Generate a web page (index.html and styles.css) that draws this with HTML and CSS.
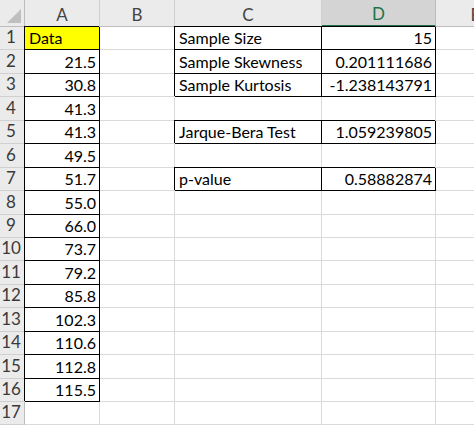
FILE: index.html
```html
<!DOCTYPE html>
<html>
<head>
<meta charset="utf-8">
<link rel="stylesheet" href="styles.css">
</head>
<body>
<div class="sheet">
  <div class="corner"><svg class="tri" width="14" height="14" viewBox="0 0 14 14"><polygon points="14,0 14,14 0,14" fill="#bfbfbf"/></svg></div>
  <div class="ch">A</div><div class="ch">B</div><div class="ch">C</div><div class="ch sel">D</div><div class="ch">E</div>

  <div class="rh">1</div><div class="cell b hl">Data</div><div class="cell"></div><div class="cell b">Sample Size</div><div class="cell b num">15</div><div class="cell"></div>
  <div class="rh">2</div><div class="cell b num">21.5</div><div class="cell"></div><div class="cell b">Sample Skewness</div><div class="cell b num">0.201111686</div><div class="cell"></div>
  <div class="rh">3</div><div class="cell b num">30.8</div><div class="cell"></div><div class="cell b">Sample Kurtosis</div><div class="cell b num">-1.238143791</div><div class="cell"></div>
  <div class="rh">4</div><div class="cell b num">41.3</div><div class="cell"></div><div class="cell"></div><div class="cell"></div><div class="cell"></div>
  <div class="rh">5</div><div class="cell b num">41.3</div><div class="cell"></div><div class="cell b">Jarque-Bera Test</div><div class="cell b num">1.059239805</div><div class="cell"></div>
  <div class="rh">6</div><div class="cell b num">49.5</div><div class="cell"></div><div class="cell"></div><div class="cell"></div><div class="cell"></div>
  <div class="rh">7</div><div class="cell b num">51.7</div><div class="cell"></div><div class="cell b">p-value</div><div class="cell b num">0.58882874</div><div class="cell"></div>
  <div class="rh">8</div><div class="cell b num">55.0</div><div class="cell"></div><div class="cell"></div><div class="cell"></div><div class="cell"></div>
  <div class="rh">9</div><div class="cell b num">66.0</div><div class="cell"></div><div class="cell"></div><div class="cell"></div><div class="cell"></div>
  <div class="rh">10</div><div class="cell b num">73.7</div><div class="cell"></div><div class="cell"></div><div class="cell"></div><div class="cell"></div>
  <div class="rh">11</div><div class="cell b num">79.2</div><div class="cell"></div><div class="cell"></div><div class="cell"></div><div class="cell"></div>
  <div class="rh">12</div><div class="cell b num">85.8</div><div class="cell"></div><div class="cell"></div><div class="cell"></div><div class="cell"></div>
  <div class="rh">13</div><div class="cell b num">102.3</div><div class="cell"></div><div class="cell"></div><div class="cell"></div><div class="cell"></div>
  <div class="rh">14</div><div class="cell b num">110.6</div><div class="cell"></div><div class="cell"></div><div class="cell"></div><div class="cell"></div>
  <div class="rh">15</div><div class="cell b num">112.8</div><div class="cell"></div><div class="cell"></div><div class="cell"></div><div class="cell"></div>
  <div class="rh">16</div><div class="cell b num">115.5</div><div class="cell"></div><div class="cell"></div><div class="cell"></div><div class="cell"></div>
  <div class="rh">17</div><div class="cell"></div><div class="cell"></div><div class="cell"></div><div class="cell"></div><div class="cell"></div>
</div>
</body>
</html>
```
FILE: styles.css
```css
html, body {
  margin: 0;
  padding: 0;
  background: #ffffff;
  overflow: hidden;
}
body {
  width: 474px;
  height: 427px;
  font-family: Lato, "Liberation Sans", sans-serif;
  font-size: 16px;
  color: #000;
}
.sheet {
  display: grid;
  grid-template-columns: 25px 75px 75px 147px 114px 80px;
  grid-template-rows: 27px repeat(17, 23.44px);
  width: 516px;
}
.corner {
  background: #ebebeb;
  border-right: 1px solid #bdbdbd;
  border-bottom: 1px solid #bdbdbd;
  display: flex;
  justify-content: flex-end;
  align-items: flex-end;
  padding: 0 3px 3px 0;
}
.ch {
  background: #ebebeb;
  border-right: 1px solid #d0d0d0;
  border-bottom: 1px solid #bdbdbd;
  display: flex;
  justify-content: center;
  align-items: center;
  color: #444;
  font-size: 17px;
  padding-top: 2px;
}
.ch.sel {
  background: #d4d4d4;
  color: #217346;
  border-bottom: 2px solid #217346;
  border-right-color: #bdbdbd;
}
.rh {
  background: #ebebeb;
  border-right: 1px solid #bdbdbd;
  border-bottom: 1px solid #d0d0d0;
  display: flex;
  justify-content: center;
  align-items: flex-end;
  padding: 0 2px 2px 0;
  color: #3a3a3a;
  font-size: 17px;
}
.cell {
  border-right: 1px solid #dadada;
  border-bottom: 1px solid #dadada;
  display: flex;
  align-items: flex-end;
  padding: 0 3px 2px 4px;
  white-space: nowrap;
}
.cell.b {
  border-right-color: #000;
  border-bottom-color: #000;
  box-shadow: -1px -1px 0 0 #000;
}
.cell.num {
  justify-content: flex-end;
}
.cell.hl {
  background: #ffff00;
}
```
